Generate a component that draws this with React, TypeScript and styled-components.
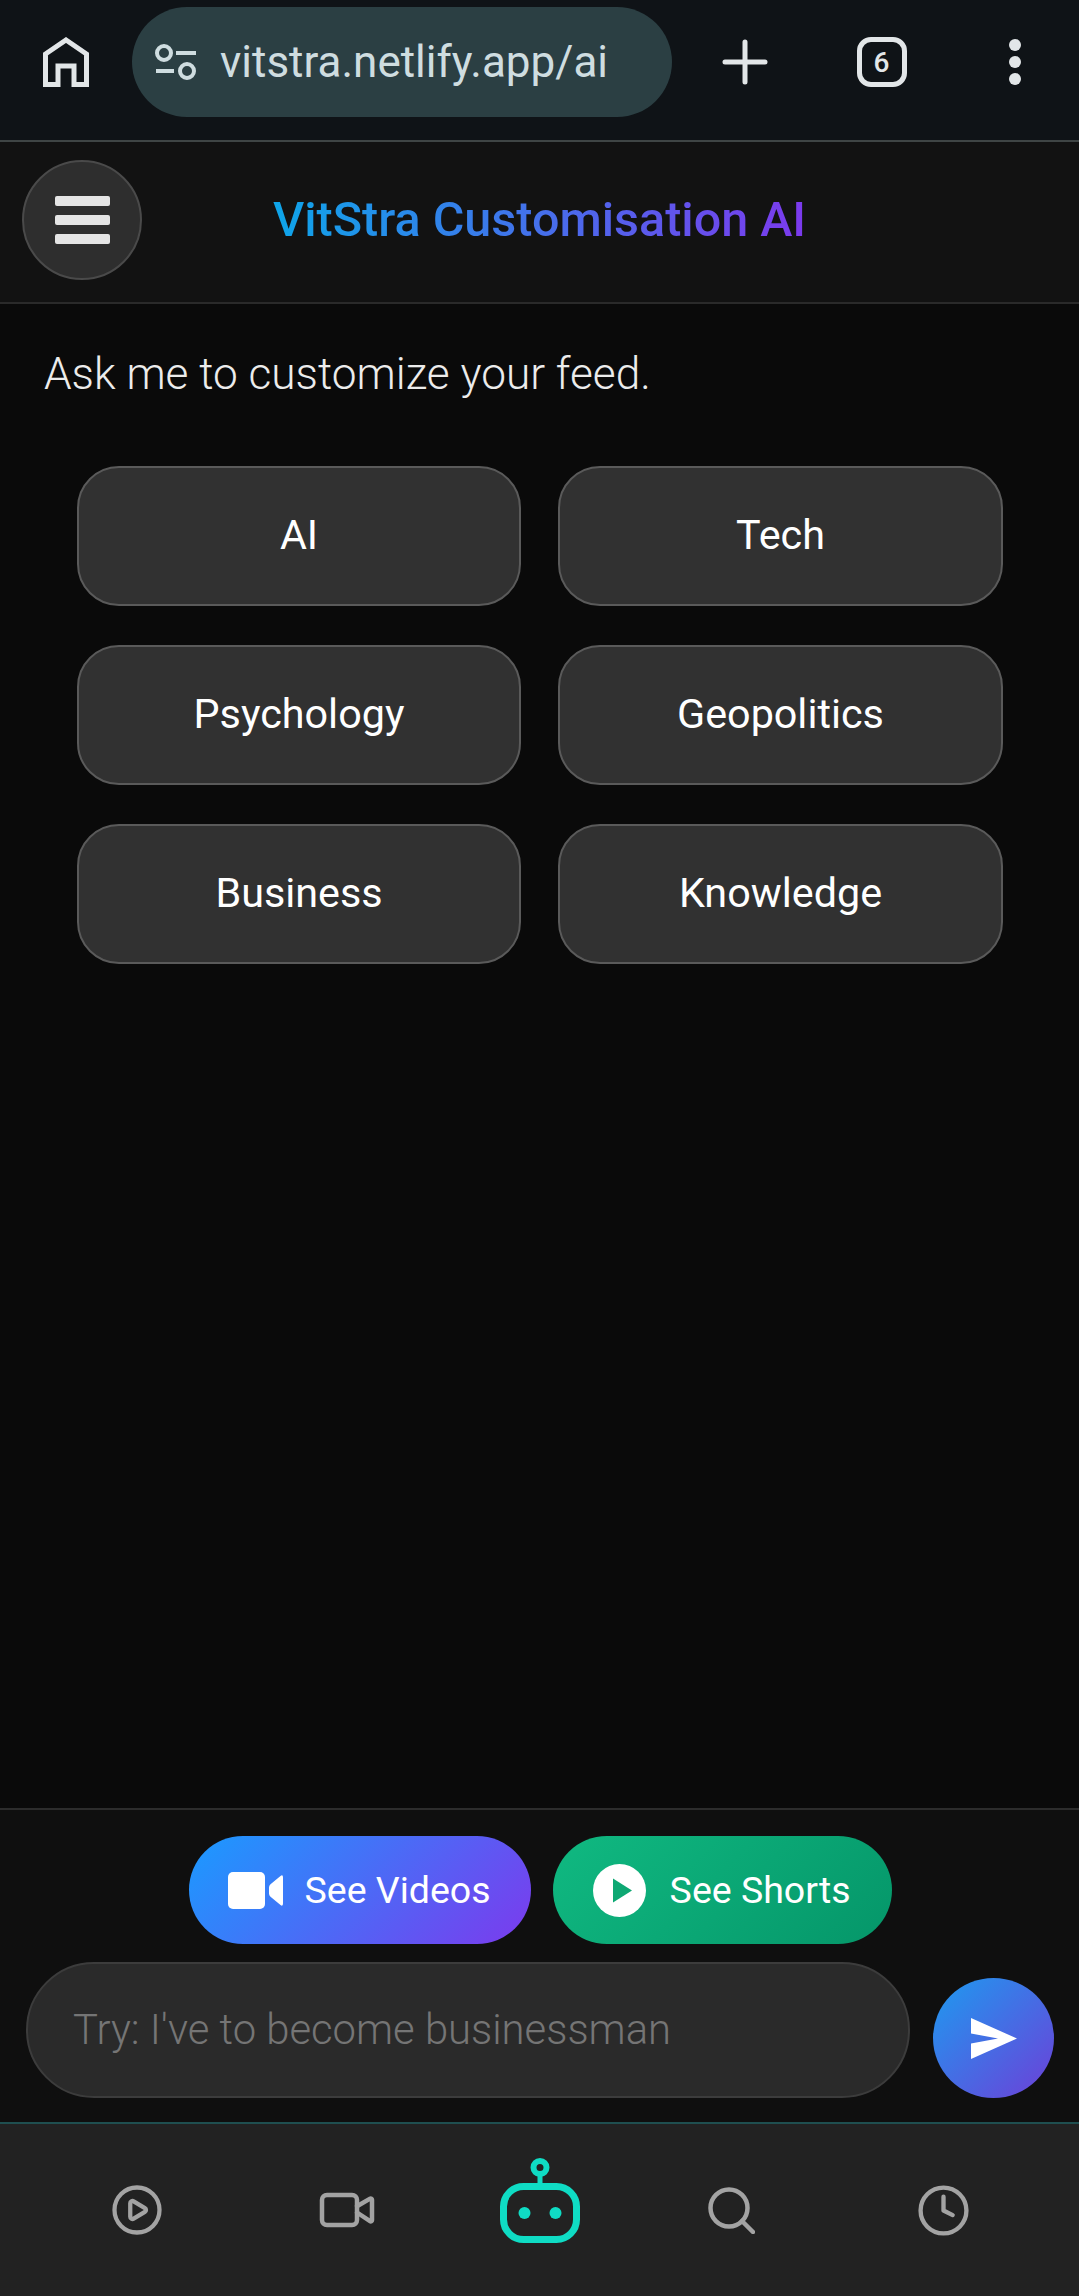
import React from 'react';
import styled, { createGlobalStyle } from 'styled-components';
import { Clock, CirclePlay, Video } from 'lucide-react';

const GlobalStyle = createGlobalStyle`
  html, body, #root {
    margin: 0;
    height: 100%;
    background: #0a0a0a;
  }

  * {
    box-sizing: border-box;
  }

  body {
    font-family: Roboto, "Liberation Sans", sans-serif;
  }
`;

const Page = styled.div`
  display: flex;
  flex-direction: column;
  height: 2296px;
  overflow: hidden;
`;

const BrowserBar = styled.div`
  display: flex;
  align-items: flex-start;
  flex: none;
  height: 142px;
  padding: 7px 0 0 43px;
  background: #0f1317;
  border-bottom: 2px solid #3f4545;
`;

const HomeSlot = styled.div`
  display: flex;
  flex: none;
  width: 89px;
  padding-top: 30px;
`;

const UrlPill = styled.div`
  display: flex;
  align-items: center;
  gap: 23px;
  flex: none;
  width: 540px;
  height: 110px;
  padding-left: 23px;
  background: #2b3f43;
  border-radius: 55px;
`;

const UrlText = styled.span`
  font-size: 44px;
  color: #cfdde0;
  white-space: nowrap;
`;

const BrowserActions = styled.div`
  display: grid;
  grid-template-columns: 137px 137px 1fr;
  flex: 1;
  height: 110px;
  padding: 0 0 0 4px;
  justify-items: center;
  align-items: center;
`;

const TabCount = styled.div`
  display: flex;
  align-items: center;
  justify-content: center;
  width: 50px;
  height: 50px;
  border: 5px solid #e2e6e8;
  border-radius: 14px;
  font-size: 28px;
  font-weight: 500;
  color: #e2e6e8;
`;

const MenuDots = styled.div`
  display: flex;
  flex-direction: column;
  gap: 5px;

  span {
    width: 12px;
    height: 12px;
    border-radius: 50%;
    background: #e2e6e8;
  }
`;

const Header = styled.header`
  display: grid;
  grid-template-columns: 120px 1fr 120px;
  align-items: start;
  flex: none;
  height: 162px;
  padding: 18px 22px 0;
  background: #121212;
  border-bottom: 2px solid #2a2a2a;
`;

const MenuButton = styled.button`
  display: flex;
  flex-direction: column;
  align-items: center;
  justify-content: center;
  gap: 9px;
  width: 120px;
  height: 120px;
  padding: 0;
  background: #2e2e2e;
  border: 2px solid #4a4a4a;
  border-radius: 50%;

  span {
    width: 55px;
    height: 10px;
    background: #e5e5e5;
    border-radius: 2px;
  }
`;

const Title = styled.h1`
  margin: 0;
  text-align: center;
  font-size: 48.5px;
  line-height: 120px;
  font-weight: 500;
`;

const GradientText = styled.span`
  background: linear-gradient(90deg, #0ea5e9, #7c3aed);
  -webkit-background-clip: text;
  background-clip: text;
  color: transparent;
`;

const Content = styled.main`
  flex: 1;
  min-height: 0;
  padding: 44px 76px 0 77px;
  background: #0a0a0a;
`;

const Intro = styled.p`
  margin: 0 0 65px -33px;
  font-size: 44.2px;
  line-height: 53px;
  font-weight: 300;
  color: #ececec;
`;

const ChipGrid = styled.div`
  display: grid;
  grid-template-columns: 444px 445px;
  gap: 39px 37px;
`;

const Chip = styled.button`
  height: 140px;
  padding: 0 0 2px;
  background: #313131;
  border: 2px solid #5a5a5a;
  border-radius: 42px;
  font-family: inherit;
  font-size: 41.3px;
  font-weight: 450;
  color: #ffffff;
`;

const BottomPanel = styled.div`
  flex: none;
  padding: 26px 25px 24px 26px;
  background: #0f0f0f;
  border-top: 2px solid #2c2c2c;
`;

const ActionRow = styled.div`
  display: flex;
  justify-content: center;
  gap: 22px;
`;

const ActionButton = styled.button<{ $from: string; $to: string; $wide?: boolean }>`
  display: flex;
  align-items: center;
  gap: ${props => (props.$wide ? '24px' : '22px')};
  height: 108px;
  padding: ${props => (props.$wide ? '0 41px 0 40px' : '0 40px 0 39px')};
  background: linear-gradient(135deg, ${props => props.$from}, ${props => props.$to});
  border: none;
  border-radius: 54px;
  font-family: inherit;
  font-size: 37.5px;
  font-weight: 450;
  color: #ffffff;
  white-space: nowrap;
`;

const Composer = styled.div`
  display: flex;
  align-items: flex-end;
  gap: 23px;
  margin-top: 18px;
`;

const PromptInput = styled.input`
  width: 884px;
  height: 136px;
  padding: 0 40px 2px 45px;
  background: #2a2a2a;
  border: 2px solid #3c3c3c;
  border-radius: 68px;
  outline: none;
  font-family: inherit;
  font-size: 41.8px;
  font-weight: 300;
  color: #ffffff;

  &::placeholder {
    color: #757575;
    opacity: 1;
  }
`;

const SendButton = styled.button`
  display: flex;
  align-items: center;
  justify-content: center;
  flex: none;
  width: 121px;
  height: 120px;
  padding: 0;
  background: linear-gradient(135deg, #1d9bf0, #6d3fd8);
  border: none;
  border-radius: 50%;
`;

const BottomNav = styled.nav`
  display: grid;
  grid-template-columns: 210px 210px 176px 206px 218px;
  align-items: center;
  justify-items: center;
  flex: none;
  height: 174px;
  padding-left: 32px;
  background: #222222;
  border-top: 2px solid #1f4f50;
  color: #a3a3a3;
`;

const NavItem = styled.div`
  display: flex;
  align-items: center;
  justify-content: center;
`;

const RobotItem = styled(NavItem)`
  padding-bottom: 17px;
`;

const HomeIcon = () => (
  <svg width="46" height="50" viewBox="0 0 46 50" fill="none" stroke="#e2e6e8" strokeWidth="5">
    <path d="M2.500 47.500V17L23 3l20.500 14v30.500H31V29H15v18.500z" strokeLinejoin="miter" />
  </svg>
);

const TuneIcon = () => (
  <svg width="42" height="36" viewBox="0 0 42 36" fill="none" stroke="#cfdde0" strokeWidth="4">
    <circle cx="9" cy="9" r="7" />
    <path d="M21 9h20M1 27h18" />
    <circle cx="32" cy="27" r="7" />
  </svg>
);

const PlusIcon = () => (
  <svg width="46" height="46" viewBox="0 0 46 46" fill="none" stroke="#e2e6e8" strokeWidth="5" strokeLinecap="round">
    <path d="M23 3v40M3 23h40" />
  </svg>
);

const VideoSolidIcon = () => (
  <svg width="55" height="37" viewBox="0 0 55 37" fill="#ffffff">
    <rect x="0" y="0" width="37" height="37" rx="5" />
    <path d="M41 15.500q0-2 1.500-3.200l10-8.300q2.500-1.800 2.500 1.500v26q0 3.300-2.500 1.500l-10-8.300q-1.500-1.200-1.500-3.200z" />
  </svg>
);

const PlaySolidIcon = () => (
  <svg width="53" height="53" viewBox="0 0 53 53">
    <circle cx="26.500" cy="26.500" r="26.500" fill="#ffffff" />
    <path d="M20 14.500v24L39 26.500z" fill="#0ea873" />
  </svg>
);

const SendIcon = () => (
  <svg width="46" height="41" viewBox="0 0 46 41" fill="#ffffff">
    <path d="M0 0l46 20.500L0 41l0-15.500 27-5-27-5z" />
  </svg>
);

const SearchIcon = () => (
  <svg width="47" height="47" viewBox="0 0 47 47" fill="none" stroke="currentColor" strokeWidth="4.500" strokeLinecap="round">
    <circle cx="21" cy="21" r="18.500" />
    <path d="M34 34l11 11" />
  </svg>
);

const RobotIcon = () => (
  <svg width="80" height="87" viewBox="0 0 80 87" fill="none">
    <circle cx="40" cy="9.500" r="6.500" stroke="#0fdcc4" strokeWidth="6" />
    <path d="M40 15v12" stroke="#0fdcc4" strokeWidth="5" />
    <rect x="3.500" y="28.500" width="73" height="53" rx="20" stroke="#0fdcc4" strokeWidth="7" />
    <circle cx="24.500" cy="55" r="6" fill="#0fdcc4" />
    <circle cx="55.500" cy="55" r="6" fill="#0fdcc4" />
  </svg>
);

const topics = ['AI', 'Tech', 'Psychology', 'Geopolitics', 'Business', 'Knowledge'];

export default function App() {
  return (
    <Page>
      <GlobalStyle />

      <BrowserBar>
        <HomeSlot>
          <HomeIcon />
        </HomeSlot>
        <UrlPill>
          <TuneIcon />
          <UrlText>vitstra.netlify.app/ai</UrlText>
        </UrlPill>
        <BrowserActions>
          <PlusIcon />
          <TabCount>6</TabCount>
          <MenuDots>
            <span />
            <span />
            <span />
          </MenuDots>
        </BrowserActions>
      </BrowserBar>

      <Header>
        <MenuButton aria-label="Menu">
          <span />
          <span />
          <span />
        </MenuButton>
        <Title>
          <GradientText>VitStra Customisation AI</GradientText>
        </Title>
      </Header>

      <Content>
        <Intro>Ask me to customize your feed.</Intro>
        <ChipGrid>
          {topics.map(topic => (
            <Chip key={topic}>{topic}</Chip>
          ))}
        </ChipGrid>
      </Content>

      <BottomPanel>
        <ActionRow>
          <ActionButton $from="#1a9bff" $to="#7c3aed">
            <VideoSolidIcon />
            See Videos
          </ActionButton>
          <ActionButton $from="#10b981" $to="#059669" $wide>
            <PlaySolidIcon />
            See Shorts
          </ActionButton>
        </ActionRow>
        <Composer>
          <PromptInput placeholder="Try: I've to become businessman" />
          <SendButton aria-label="Send">
            <SendIcon />
          </SendButton>
        </Composer>
      </BottomPanel>

      <BottomNav>
        <NavItem>
          <CirclePlay size={54} strokeWidth={1.9} />
        </NavItem>
        <NavItem>
          <Video size={60} strokeWidth={1.8} />
        </NavItem>
        <RobotItem>
          <RobotIcon />
        </RobotItem>
        <NavItem>
          <SearchIcon />
        </NavItem>
        <NavItem>
          <Clock size={55} strokeWidth={1.9} />
        </NavItem>
      </BottomNav>
    </Page>
  );
}
